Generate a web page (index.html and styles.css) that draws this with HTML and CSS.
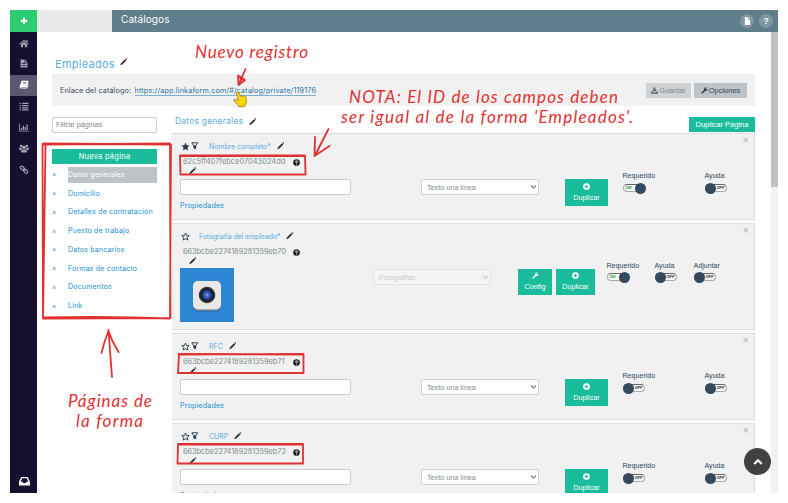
FILE: index.html
```html
<!DOCTYPE html>
<html lang="es">
<head>
<meta charset="utf-8">
<title>Catálogos</title>
<link rel="stylesheet" href="styles.css">
</head>
<body>
<svg class="defs" aria-hidden="true">
  <symbol id="pencil" viewBox="0 0 12 12"><path d="M.5 11.500l1-3.200L8 1.800 10.200 4 3.700 10.500zM8.700 1.100l.6-.6q.6-.4 1.100 0l1.100 1.100q.4.5 0 1.100l-.6.6z"/></symbol>
  <symbol id="star" viewBox="0 0 16 16"><path d="M8 .8l2.200 4.800 5.200.6-3.900 3.500 1.100 5.200L8 12.300l-4.600 2.600 1.100-5.200L.6 6.200l5.200-.6z"/></symbol>
  <symbol id="star-o" viewBox="0 0 16 16"><path fill="none" stroke="currentColor" stroke-width="1.700" d="M8 1.800l1.900 4.300 4.700.5-3.500 3.100 1 4.600L8 11.900l-4.100 2.400 1-4.600L1.400 6.600l4.700-.5z"/></symbol>
  <symbol id="funnel" viewBox="0 0 14 14"><path fill="none" stroke="currentColor" stroke-width="1.800" d="M1.500 1.500h11L8.700 7v5.600L5.300 11V7z"/><path d="M5.300 6h3.400v7L5.300 11z"/></symbol>
  <symbol id="help" viewBox="0 0 14 14"><circle cx="7" cy="7" r="6.700"/><path fill="none" stroke="#fff" stroke-width="1.800" d="M4.900 5.500Q5 3.700 7 3.700q2 0 2.100 1.700Q9.100 6.500 7 7.300v1.200M7 9.500v1.600"/></symbol>
  <symbol id="plus-circle" viewBox="0 0 14 14"><path fill-rule="evenodd" d="M7 .3a6.700 6.700 0 1 1 0 13.400A6.700 6.700 0 0 1 7 .3zM5.900 3.300v2.600H3.300v2.200h2.600v2.600h2.200V8.100h2.600V5.900H8.100V3.300z"/></symbol>
  <symbol id="wrench" viewBox="0 0 14 14"><path d="M1 11.200l5.200-5.200Q5.600 3.400 7.300 1.700 9 .3 11.200.8L9.100 2.900l.4 1.600 1.600.4 2.200-2.100q.4 2.200-1.100 3.900Q10.500 8.200 8.100 7.800L2.900 13q-.9.700-1.700-.1-.8-.8-.2-1.700z"/></symbol>
  <symbol id="chevron" viewBox="0 0 10 8"><path fill="none" stroke="currentColor" stroke-width="2" d="M1.500 2L5 5.600 8.500 2"/></symbol>
</svg>

<div class="app">
  <header class="topbar">
    <div class="add"><svg viewBox="0 0 10 10"><path d="M3.700 1h2.600v2.700H9v2.600H6.300V9H3.700V6.300H1V3.700h2.700z"/></svg></div>
    <div class="brand"></div>
    <div class="bar">
      <h1>Catálogos</h1>
      <div class="round"><svg viewBox="0 0 10 12"><path d="M1 0h4.500v4H9v8H1zM6.400.2L9 3.100H6.400z"/></svg></div>
      <div class="round">?</div>
    </div>
  </header>
  <div class="body">
    <nav class="side">
      <div class="nav"><svg viewBox="0 0 16 14"><path d="M8 1l7.500 6.300-1 1.200L8 3.200 1.500 8.500l-1-1.200zM11.500 1.500h2v4l-2-1.700zM8 4.500l5 4V13H9.500V9.500h-3V13H3V8.500z"/></svg></div>
      <div class="nav doc"><svg viewBox="0 0 14 16"><path fill-rule="evenodd" d="M1 1h7v5h5v9H1zM9 1l4 4H9zM3.500 7.500V9h7V7.500zm0 3V12h7v-1.500z"/></svg></div>
      <div class="nav on"><svg viewBox="0 0 16 14"><path fill-rule="evenodd" d="M5 1h9.500q1 .2.700 1.200L12.700 10q-.3.800-1.200.8H3.200q-.8.900.3 1.100h9l2-6.500 1 .8-2.100 6.300q-.3.800-1.200.8H3Q.4 12.500 1 10L3.700 2Q4 1 5 1zM6.500 3.500l-.3 1h5.500l.3-1zM5.800 5.700l-.3 1H11l.3-1z"/></svg></div>
      <div class="nav"><svg viewBox="0 0 16 14"><path d="M1 1h2v2H1zM5 1h10v2H5zM1 4.500h2v2H1zM5 4.500h10v2H5zM1 8h2v2H1zM5 8h10v2H5zM1 11.500h2v2H1zM5 11.500h10v2H5z"/></svg></div>
      <div class="nav"><svg viewBox="0 0 16 14"><path d="M0 1h1.300v11H16v1.300H0zM3 7.500h2V11H3zM6 4h2v7H6zM9 6h2v5H9zM12 2h2v9h-2z"/></svg></div>
      <div class="nav"><svg viewBox="0 0 18 16"><circle cx="4" cy="3.500" r="2.300"/><circle cx="14" cy="3.500" r="2.300"/><circle cx="9" cy="6" r="3.200"/><path d="M0 10V7.500Q1 5.500 4 6.500L5.500 9 3.500 11zM18 10V7.500q-1-2-4-1L12.500 9l2 2zM3.500 15q-.5-5 3-5.500 2.500 1.500 5 0 3.500.5 3 5.500z"/></svg></div>
      <div class="nav"><svg viewBox="0 0 16 16"><g fill="none" stroke="currentColor" stroke-width="2"><rect x="1" y="3" width="8" height="5" rx="2.500" transform="rotate(45 5 5.500)"/><rect x="7" y="8.500" width="8" height="5" rx="2.500" transform="rotate(45 11 11)"/><path d="M6 6.500l4 4"/></g></svg></div>
      <div class="nav inbox"><svg viewBox="0 0 16 14"><path fill-rule="evenodd" d="M3.500 1h9L16 8v5.500H0V8zM4.700 3L2.300 8h3l1 2h3.400l1-2h3L11.300 3z"/></svg></div>
    </nav>

    <main class="content">
      <h2 class="title">Empleados <svg class="i8"><use href="#pencil"/></svg></h2>
      <div class="linkbar">
        <span class="lbl">Enlace del catálogo:</span>
        <span class="urlbox"><a class="url">https://app.linkaform.com/#/catalog/private/119176</a></span>
        <div class="btn off"><svg class="i7" viewBox="0 0 14 14"><path d="M5 1h4v4.500h3L7 10 2 5.500h3zM0 9h3l4 3 4-3h3v4.500H0z"/></svg>Guardar</div>
        <div class="btn"><svg class="i7"><use href="#wrench"/></svg>Opciones</div>
      </div>
      <div class="columns">
        <aside class="pages">
          <div class="filter">Filtrar páginas</div>
          <div class="new">Nueva página</div>
          <ul>
            <li class="sel"><i>×</i><span>Datos generales</span></li>
            <li><i>×</i><span>Domicilio</span></li>
            <li><i>×</i><span>Detalles de contratación</span></li>
            <li><i>×</i><span>Puesto de trabajo</span></li>
            <li><i>×</i><span>Datos bancarios</span></li>
            <li><i>×</i><span>Formas de contacto</span></li>
            <li><i>×</i><span>Documentos</span></li>
            <li><i>×</i><span>Link</span></li>
          </ul>
        </aside>
        <section class="fields">
          <div class="head"><h3>Datos generales <svg class="i8"><use href="#pencil"/></svg></h3><div class="dup-page">Duplicar Página</div></div>

          <article class="panel">
            <span class="close">×</span>
            <div class="info">
              <div class="name"><svg class="i9"><use href="#star"/></svg><svg class="i8 fn"><use href="#funnel"/></svg><b class="n1">Nombre completo*</b><svg class="i8"><use href="#pencil"/></svg></div>
              <div class="id"><span class="id1">62c5ff407febce07043024dd</span><svg class="i7"><use href="#help"/></svg></div>
              <svg class="i8 edit"><use href="#pencil"/></svg>
              <div class="input"></div>
              <a class="props">Propiedades</a>
            </div>
            <div class="select">Texto una línea<svg><use href="#chevron"/></svg></div>
            <div class="action"><svg><use href="#plus-circle"/></svg>Duplicar</div>
            <div class="toggle yes">Requerido<span class="sw">ON</span></div>
            <div class="toggle">Ayuda<span class="sw">OFF</span></div>
          </article>

          <article class="panel photo">
            <span class="close">×</span>
            <div class="info">
              <div class="name"><svg class="i9"><use href="#star-o"/></svg><b class="n2">Fotografía del empleado*</b><svg class="i8"><use href="#pencil"/></svg></div>
              <div class="id"><span>663bcbe2274189281359eb70</span><svg class="i7"><use href="#help"/></svg></div>
              <svg class="i8 edit"><use href="#pencil"/></svg>
              <svg class="camera" viewBox="0 0 54 54">
                <defs><radialGradient id="lens"><stop offset="0" stop-color="#86a8e8"/><stop offset=".25" stop-color="#3d62b5"/><stop offset=".55" stop-color="#173a91"/><stop offset=".62" stop-color="#16202f"/><stop offset=".78" stop-color="#222"/><stop offset="1" stop-color="#444"/></radialGradient></defs>
                <rect width="54" height="54" fill="#2c86d3"/>
                <rect x="13" y="14" width="28" height="29.500" rx="5" fill="#1d5f9b"/>
                <rect x="13" y="13" width="28" height="29.500" rx="5" fill="#aaa"/>
                <rect x="13" y="13" width="28" height="28" rx="5" fill="#e9e9e9"/>
                <circle cx="27" cy="27" r="8.300" fill="url(#lens)"/>
              </svg>
            </div>
            <div class="select dis">Fotografías<svg><use href="#chevron"/></svg></div>
            <div class="action"><svg><use href="#wrench"/></svg>Config</div>
            <div class="action"><svg><use href="#plus-circle"/></svg>Duplicar</div>
            <div class="toggle yes">Requerido<span class="sw">ON</span></div>
            <div class="toggle">Ayuda<span class="sw">OFF</span></div>
            <div class="toggle">Adjuntar<span class="sw">OFF</span></div>
          </article>

          <article class="panel">
            <span class="close">×</span>
            <div class="info">
              <div class="name"><svg class="i9"><use href="#star-o"/></svg><svg class="i8 fn"><use href="#funnel"/></svg><b>RFC</b><svg class="i8"><use href="#pencil"/></svg></div>
              <div class="id"><span>663bcbe2274189281359eb71</span><svg class="i7"><use href="#help"/></svg></div>
              <svg class="i8 edit"><use href="#pencil"/></svg>
              <div class="input"></div>
              <a class="props">Propiedades</a>
            </div>
            <div class="select">Texto una línea<svg><use href="#chevron"/></svg></div>
            <div class="action"><svg><use href="#plus-circle"/></svg>Duplicar</div>
            <div class="toggle">Requerido<span class="sw">OFF</span></div>
            <div class="toggle">Ayuda<span class="sw">OFF</span></div>
          </article>

          <article class="panel">
            <span class="close">×</span>
            <div class="info">
              <div class="name"><svg class="i9"><use href="#star-o"/></svg><svg class="i8 fn"><use href="#funnel"/></svg><b>CURP</b><svg class="i8"><use href="#pencil"/></svg></div>
              <div class="id"><span>663bcbe2274189281359eb72</span><svg class="i7"><use href="#help"/></svg></div>
              <svg class="i8 edit"><use href="#pencil"/></svg>
              <div class="input"></div>
              <a class="props">Propiedades</a>
            </div>
            <div class="select">Texto una línea<svg><use href="#chevron"/></svg></div>
            <div class="action"><svg><use href="#plus-circle"/></svg>Duplicar</div>
            <div class="toggle">Requerido<span class="sw">OFF</span></div>
            <div class="toggle">Ayuda<span class="sw">OFF</span></div>
          </article>
        </section>
      </div>
    </main>
    <div class="scroll"><div class="thumb"></div></div>
  </div>
</div>

<div class="to-top"><svg viewBox="0 0 12 10"><path d="M1.500 8L6 3.500 10.500 8" fill="none" stroke="#fff" stroke-width="2.600"/></svg></div>

<svg class="notes" viewBox="0 0 788 503">
  <g class="ink">
    <path d="M44 144.500L170 143.500L170.500 318L43 318.500L45.500 144zM43 143.500L171 144.500L170 318.500Q110 316 43 317.500L42.500 145z"/>
    <path d="M180 155.500L305 155.500L305.500 174.500L180.500 174.500zM180 156L305 156"/>
    <path d="M179 354.500L303.500 354L303.500 373L178 373zM178.500 354L303 354.500"/>
    <path d="M178 444L303 444L303 463.500L177.500 463.500zM178.500 444.500L303 444.500"/>
    <path d="M112 377L108.500 330M101.500 353Q104 342 108.500 331Q112 342 118.500 352"/>
    <path d="M328.500 129L315 155.500M315 137L314.500 156L329.500 146"/>
    <path d="M245.500 69L239 84M238 75.500L238.500 85L245 80zM240 78L243 80"/>
  </g>
  <g class="hand">
    <text x="195" y="58" textLength="113">Nuevo registro</text>
    <text x="349" y="103" textLength="269">NOTA: El ID de los campos deben</text>
    <text x="341" y="123" textLength="292">ser igual al de la forma 'Empleados'.</text>
    <text x="68" y="407" textLength="84">Páginas de</text>
    <text x="76" y="426.500" textLength="67">la forma</text>
  </g>
  <path class="pointer" d="M237 95q-1.800-2.200.2-3 1.300-.3 1.900 1.100l1.600 3.300q.9-1.200 2-.2 1-.9 1.900.3 1.100-.4 1.500.9l.3 3.600q.1 3-1.600 4.200v1.500h-6.300v-1.200l-4.600-4.600q-.5-1.700 1.300-1.500l3.200 1.200z"/>
</svg>
</body>
</html>
```
FILE: styles.css
```css
* { box-sizing: border-box; }
body { margin: 0; width: 788px; height: 503px; overflow: hidden; background: #fff; padding: 10px; font-family: "Liberation Sans", Arial, sans-serif; font-size: 7.5px; color: #34495e; position: relative; }
h1, h2, h3, ul { margin: 0; padding: 0; font-weight: 400; }
svg { fill: currentColor; flex: none; display: block; }
.defs { position: absolute; width: 0; height: 0; }
.i7 { width: 7px; height: 7px; color: #333; }
.i8 { width: 7.500px; height: 7.500px; color: #333; }
.i9 { width: 9px; height: 9px; color: #2b3b50; }

.app { width: 768px; height: 483px; overflow: hidden; display: flex; flex-direction: column; }
.topbar { display: flex; height: 22px; flex: none; }
.add { width: 27px; background: #2ecc71; color: #fff; display: grid; place-items: center; }
.add svg { width: 8px; height: 8px; }
.brand { width: 75px; background: #e9e9e9; }
.bar { flex: 1; background: #607d8b; display: flex; align-items: center; padding: 0 5px 0 9px; gap: 5px; color: #fff; }
.bar h1 { flex: 1; font: 10px/18px Inter, sans-serif; letter-spacing: .1px; padding-bottom: 4px; }
.round { width: 14px; height: 14px; border-radius: 50%; background: #8097a3; display: grid; place-items: center; font-weight: 700; font-size: 8.5px; }
.round svg { width: 7px; height: 8px; }

.body { display: flex; flex: 1; min-height: 0; }
.side { width: 27px; background: #160f2e; color: #a3a0af; display: flex; flex-direction: column; padding-top: 1px; }
.nav { height: 21px; display: grid; place-items: center; padding-left: 1px; }
.nav svg { width: 10px; height: 9px; }
.nav.doc { padding-bottom: 3px; }
.nav.on { background: #5c5870; color: #fff; padding-bottom: 2px; }
.nav.inbox { margin-top: auto; color: #fff; height: 24px; }
.nav.inbox svg { width: 11px; height: 10px; }
.scroll { width: 7.500px; background: #f1f1f1; }
.thumb { height: 155px; background: #c1c1c1; }

.content { flex: 1; padding: 22px 15.500px 0 15px; min-width: 0; overflow: hidden; }
.title { height: 20px; line-height: 20px; padding-left: 3px; font-family: Inter, sans-serif; font-size: 11px; letter-spacing: .27px; color: #5dade2; display: flex; align-items: center; gap: 5px; }
.title .i8 { margin-bottom: 4px; }
.linkbar { height: 32px; background: #f1f1f1; display: flex; align-items: center; padding: 0 8px; }
.lbl, .url { font-family: Inter, sans-serif; font-size: 7.200px; white-space: nowrap; }
.lbl { width: 74.500px; letter-spacing: .13px; padding-top: 1px; }
.urlbox { flex: 1; padding-top: 1px; }
.url { color: #2471a3; border-bottom: 1px solid #7fb0d0; letter-spacing: .18px; }
.btn { height: 15px; width: 53px; background: #bdc3c7; display: flex; align-items: center; justify-content: center; margin-left: 3px; gap: 1px; color: #34495e; }
.btn.off { width: 45px; background: #ced2d5; color: #81868a; margin-left: 0; font-size: 7.200px; }
.btn.off .i7 { color: #666; }

.columns { display: flex; padding-top: 11px; gap: 15px; }
.pages { width: 105px; flex: none; font-family: Inter, sans-serif; }
.filter { height: 16px; border: 1px solid #ccc; border-radius: 2px; padding: 0 3px; line-height: 14px; font: 7.300px/14px "Liberation Sans", sans-serif; color: #888; }
.new { margin: 16px 0 1.500px; height: 15px; background: #1abc9c; color: #fff; text-align: center; line-height: 15px; font-size: 7.500px; letter-spacing: .25px; }
.pages ul { list-style: none; }
.pages li { height: 18.750px; display: flex; align-items: center; color: #2492d1; font-size: 7.100px; letter-spacing: .14px; }
.pages i { width: 16px; font-style: normal; font-size: 6.500px; line-height: 8px; padding-bottom: 1px; }
.pages span { flex: 1; height: 16px; line-height: 16px; white-space: nowrap; }
.sel span { background: #bdc3c7; color: #fff; }

.fields { flex: 1; min-width: 0; }
.head { display: flex; height: 16px; justify-content: space-between; }
h3 { font: 8.500px/9px Inter, sans-serif; letter-spacing: .2px; color: #5dade2; padding-left: 3px; display: flex; height: 9px; align-items: center; gap: 5.500px; }
.dup-page { width: 66px; height: 15px; background: #1abc9c; color: #fff; text-align: center; line-height: 15px; }
.panel { position: relative; height: 87px; margin-bottom: 3px; background: #f1f1f1; border: 1px solid #ddd; border-left: 0; padding-left: 8px; display: grid; grid-template-columns: 241px 144px 57px 82px 1fr; align-items: start; }
.panel.photo { height: 107px; grid-template-columns: 193px 145px 38px 50px 48px 39px 1fr; }
.close { position: absolute; right: 5.500px; top: 2px; font-size: 10px; line-height: 10px; color: #aaa; }
.info { font-family: Inter, sans-serif; color: #7f8c8d; }
.name { display: flex; align-items: center; height: 10px; margin-top: 7px; padding-left: 1px; }
.name .fn { margin-left: 1px; color: #2b3b50; }
.name b { font-weight: 400; color: #5dade2; font-size: 7px; margin: 0 6px 0 10.500px; }
.name .n1 { letter-spacing: -.07px; }
.name .n2 { margin-left: 9px; letter-spacing: -.1px; }
.id { display: flex; align-items: center; height: 10px; margin-top: 5px; padding-left: 3px; }
.id span { width: 110px; font-size: 7.400px; white-space: nowrap; letter-spacing: -.05px; }
.id .id1 { letter-spacing: .04px; }
.id .i7 { color: #222; margin-top: 3px; }
.edit { margin: .5px 0 0 9px; }
.input { margin-top: 5px; width: 171px; height: 16px; background: #fff; border: 1px solid #ccc; border-radius: 2px; }
.props { display: block; margin-top: 6px; color: #2492d1; font-size: 7.200px; line-height: 10px; letter-spacing: .14px; }
.camera { width: 54px; height: 54px; margin-top: 4px; }
.select { margin-top: 45px; width: 118px; height: 16px; background: #fff; border: 1px solid #d0d0d0; border-radius: 2px; display: flex; align-items: center; justify-content: space-between; padding: 0 1px 0 5px; color: #7f8c8d; font-size: 7.200px; }
.select svg { width: 7px; height: 6px; }
.select.dis { color: #c7c9ca; background: #f4f4f4; border-color: #e2e2e2; }
.action { margin-top: 45px; width: 43px; height: 26.500px; background: #1abc9c; color: #fff; display: flex; flex-direction: column; align-items: center; justify-content: center; gap: 3px; font-size: 7.200px; }
.action svg { width: 7px; height: 7px; }
.photo .action { width: 39px; margin-top: 44.500px; }
.photo .action:nth-of-type(3) { width: 34px; }
.toggle { margin-top: 37px; line-height: 10px; width: 50px; font-size: 7.100px; padding-left: .500px; }
.photo .toggle { width: 40px; }
.sw { position: relative; display: block; width: 22px; height: 8px; margin-top: 3px; border: 1px solid #aaa; border-top-color: #666; border-radius: 4px; background: #f6f6f6; font: italic 700 4px/6px "Liberation Sans", sans-serif; color: #222; padding-left: 11px; }
.photo .sw { margin-top: 2px; }
.sw::before { content: ""; position: absolute; left: -1px; top: -2px; width: 11px; height: 11px; border-radius: 50%; background: #34495e; }
.yes .sw { padding-left: 2px; color: #229a22; }
.yes .sw::before { left: 11px; }

.to-top { position: absolute; left: 744px; top: 448px; width: 27px; height: 27px; border-radius: 50%; background: rgba(50,50,50,.92); display: grid; place-items: center; }
.to-top svg { width: 10px; height: 9px; }
.notes { position: absolute; left: 0; top: 0; width: 788px; height: 503px; }
.ink { fill: none; stroke: #e03131; stroke-width: 1.800; stroke-linecap: round; stroke-linejoin: round; }
.hand { fill: #e03131; font: italic 17px Lato, sans-serif; }
.pointer { fill: #ffd500; stroke: #8a6a10; stroke-width: .7; }
```
